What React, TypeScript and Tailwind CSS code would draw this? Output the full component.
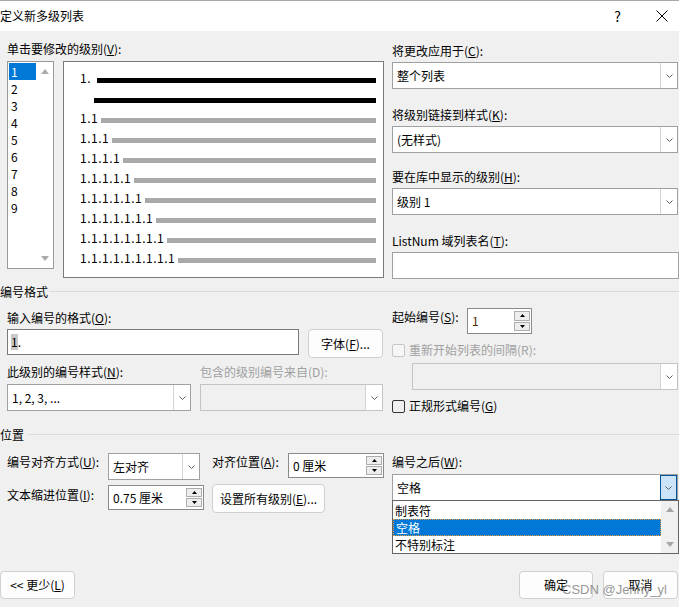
import React from 'react';

const Chevron = () => (
  <svg width="7" height="4" viewBox="0 0 7 4">
    <polyline points="0.5,0.5 3.5,3.5 6.5,0.5" fill="none" stroke="#5f5f5f" strokeWidth="1" />
  </svg>
);

const Tri = ({ up, color = '#000', w = 5, h = 3 }: { up?: boolean; color?: string; w?: number; h?: number }) => (
  <svg width={w} height={h} viewBox={`0 0 ${w} ${h}`}>
    <polygon points={up ? `0,${h} ${w / 2},0 ${w},${h}` : `0,0 ${w / 2},${h} ${w},0`} fill={color} />
  </svg>
);

const Select = ({
  value,
  className = '',
  disabled,
  focused,
}: {
  value?: string;
  className?: string;
  disabled?: boolean;
  focused?: boolean;
}) => (
  <div
    className={`flex h-[27px] border ${disabled ? 'border-[#c4c4c4] bg-[#f0f0f0]' : 'border-[#a0a0a0] bg-white'} ${className}`}
  >
    <div className="flex-1 flex items-center pl-[4px] leading-[16px] whitespace-nowrap">{value}</div>
    <div
      className={`w-[17px] flex items-center justify-center ${
        focused ? 'bg-[#cce4f7] border border-[#005499]' : 'bg-white border-l border-[#d4d4d4]'
      }`}
    >
      <Chevron />
    </div>
  </div>
);

const SpinBtn = ({ up }: { up?: boolean }) => (
  <div className="flex-1 flex items-center justify-center border border-[#adadad] bg-[#eeeeee]">
    <Tri up={up} />
  </div>
);

const Spinner = ({ value, className = '', textClass = '' }: { value?: string; className?: string; textClass?: string }) => (
  <div className={`flex h-[25px] border border-[#8a8a8a] bg-white ${className}`}>
    <div className={`flex-1 flex items-center pl-[4px] leading-[16px] whitespace-nowrap ${textClass}`}>{value}</div>
    <div className="w-[17px] flex flex-col gap-px pr-[1px] py-[2px]">
      <SpinBtn up />
      <SpinBtn />
    </div>
  </div>
);

const Btn = ({ children, className = '' }: { children: React.ReactNode; className?: string }) => (
  <div
    className={`h-[28px] flex items-center justify-center rounded-[4px] border border-[#d0d0d0] bg-[#fdfdfd] whitespace-nowrap ${className}`}
  >
    {children}
  </div>
);

const Box = ({ disabled }: { disabled?: boolean }) => (
  <span
    className={`w-[13px] h-[13px] rounded-[2px] border shrink-0 ${
      disabled ? 'border-[#c6c6c6] bg-[#f6f6f6]' : 'border-[#333333] bg-[#f0f0f0]'
    }`}
  />
);

const Label = ({ children, className = '' }: { children: React.ReactNode; className?: string }) => (
  <div className={`h-[16px] leading-[16px] whitespace-nowrap ${className}`}>{children}</div>
);

const Header = ({ title, gap }: { title: string; gap: string }) => (
  <div className="flex items-center h-[16px] leading-[16px]">
    <span>{title}</span>
    <div className={`flex-1 h-px bg-[#dadada] -mt-[2px] ${gap}`} />
  </div>
);

const levels = ['1', '2', '3', '4', '5', '6', '7', '8', '9'];
const nums = ['1.1', '1.1.1', '1.1.1.1', '1.1.1.1.1', '1.1.1.1.1.1', '1.1.1.1.1.1.1', '1.1.1.1.1.1.1.1', '1.1.1.1.1.1.1.1.1'];

const LevelList = () => (
  <div className="w-[47px] h-[208px] border border-[#9a9a9a] bg-white flex">
    <div className="pl-[1px] pt-[1px] w-[28px]">
      {levels.map((l, i) => (
        <div key={l} className={`h-[17px] leading-[17px] pl-[2px] ${i === 0 ? 'bg-[#0078d7] text-white' : ''}`}>
          {l}
        </div>
      ))}
    </div>
    <div className="w-[17px] flex flex-col justify-between">
      <div className="h-[17px] flex items-center justify-center pt-[2px]">
        <Tri up color="#ababab" w={8} h={5} />
      </div>
      <div className="h-[17px] flex items-center justify-center pb-[2px]">
        <Tri color="#ababab" w={8} h={5} />
      </div>
    </div>
  </div>
);

const Preview = () => (
  <div className="ml-[9px] w-[321px] h-[217px] border border-[#7a7a7a] bg-white pt-[6px] pl-[16px] pr-[7px]">
    <div className="flex items-center h-[20px]">
      <span className="leading-none tracking-[0.5px]">1.</span>
      <div className="flex-1 ml-[6px] h-[5px] mt-[5px] bg-black" />
    </div>
    <div className="flex items-center h-[20px] pl-[14px]">
      <div className="flex-1 h-[5px] mt-[5px] bg-black" />
    </div>
    {nums.map((n) => (
      <div key={n} className="flex items-center h-[20px]">
        <span className="leading-none tracking-[0.5px]">{n}</span>
        <div className="flex-1 ml-[3px] h-[5px] mt-[5px] bg-[#a9a9a9]" />
      </div>
    ))}
  </div>
);

export default function App() {
  return (
    <div className="relative w-[679px] h-[607px] overflow-hidden bg-[#f0f0f0] text-[12px] text-black flex flex-col font-['Noto_Sans_CJK_SC','Noto_Sans',sans-serif]">
      {/* title bar */}
      <div className="h-[31px] shrink-0 bg-white border-t border-[#a8a8a8] flex items-center">
        <span className="leading-[16px]">定义新多级列表</span>
        <span className="ml-auto text-[14px] leading-none">?</span>
        <span className="ml-[35px] mr-[11px]">
          <svg width="12" height="12" viewBox="0 0 12 12">
            <path d="M0.5 0.5 L11.5 11.5 M11.5 0.5 L0.5 11.5" stroke="#000" strokeWidth="1" />
          </svg>
        </span>
      </div>

      {/* levels + preview */}
      <div className="flex h-[253px] shrink-0">
        <div className="ml-[7px] w-[377px] flex flex-col">
          <Label className="mt-[10px]">
            单击要修改的级别(<u>V</u>):
          </Label>
          <div className="mt-[4px] flex">
            <LevelList />
            <Preview />
          </div>
        </div>
        <div className="ml-[8px] w-[287px] flex flex-col">
          <Label className="mt-[12px]">
            将更改应用于(<u>C</u>):
          </Label>
          <Select value="整个列表" className="mt-[3px] w-[286px]" />
          <Label className="mt-[18px]">
            将级别链接到样式(<u>K</u>):
          </Label>
          <Select value="(无样式)" className="mt-[3px] w-[286px]" />
          <Label className="mt-[16px]">
            要在库中显示的级别(<u>H</u>):
          </Label>
          <Select value="级别 1" className="mt-[3px] w-[286px]" />
          <Label className="mt-[18px]">
            ListNum 域列表名(<u>T</u>):
          </Label>
          <div className="mt-[3px] h-[27px] w-[287px] border border-[#a0a0a0] bg-white" />
        </div>
      </div>

      {/* number format */}
      <div className="h-[143px] shrink-0 flex flex-col">
        <Header title="编号格式" gap="ml-[2px]" />
        <div className="flex">
          <div className="ml-[7px] w-[377px] flex flex-col">
            <Label className="mt-[10px]">
              输入编号的格式(<u>O</u>):
            </Label>
            <div className="mt-[3px] flex items-start">
              <div className="w-[292px] h-[26px] border border-[#7a7a7a] bg-white flex items-center pl-[3px] leading-[16px]">
                <span className="bg-[#c8c8c8]">1</span>
                <span>.</span>
              </div>
              <Btn className="ml-[9px] w-[75px] h-[29px]">
                字体(<u>F</u>)...
              </Btn>
            </div>
            <div className="mt-[6px] flex">
              <Label className="w-[193px]">
                此级别的编号样式(<u>N</u>):
              </Label>
              <Label className="text-[#a0a0a0]">包含的级别编号来自(D):</Label>
            </div>
            <div className="mt-[4px] flex">
              <Select value="1, 2, 3, ..." className="w-[184px]" />
              <Select disabled className="ml-[9px] w-[183px]" />
            </div>
          </div>
          <div className="ml-[8px] w-[287px] flex flex-col">
            <div className="mt-[8px] flex items-start">
              <Label className="w-[75px] mt-[1px]">
                起始编号(<u>S</u>):
              </Label>
              <Spinner value="1" className="w-[65px] h-[26px]" textClass="text-[#4a2a00]" />
            </div>
            <div className="mt-[8px] h-[16px] flex items-center">
              <Box disabled />
              <span className="ml-[4px] leading-[16px] text-[#a0a0a0]">重新开始列表的间隔(R):</span>
            </div>
            <Select disabled className="mt-[5px] ml-[20px] w-[266px] bg-[#f0f0f0]" />
            <div className="mt-[8px] h-[16px] flex items-center">
              <Box />
              <span className="ml-[4px] leading-[16px]">
                正规形式编号(<u>G</u>)
              </span>
            </div>
          </div>
        </div>
      </div>

      {/* position */}
      <div className="flex-1 flex flex-col">
        <Header title="位置" gap="ml-[4px]" />
        <div className="flex">
          <div className="ml-[7px] w-[377px] flex flex-col">
            <div className="mt-[10px] flex items-start">
              <Label className="w-[101px] mt-[1px]">
                编号对齐方式(<u>U</u>):
              </Label>
              <Select value="左对齐" className="w-[92px]" />
              <Label className="ml-[12px] w-[76px] mt-[1px]">
                对齐位置(<u>A</u>):
              </Label>
              <Spinner value="0 厘米" className="w-[96px]" />
            </div>
            <div className="mt-[4px] flex items-start">
              <Label className="w-[101px] mt-[3px]">
                文本缩进位置(<u>I</u>):
              </Label>
              <Spinner value="0.75 厘米" className="w-[96px] mt-[1px]" />
              <Btn className="ml-[8px] w-[113px] h-[29px]">
                设置所有级别(<u>E</u>)...
              </Btn>
            </div>
          </div>
          <div className="ml-[8px] w-[287px] flex flex-col">
            <Label className="mt-[11px]">
              编号之后(<u>W</u>):
            </Label>
            <div className="relative mt-[4px]">
              <Select value="空格" focused className="w-[286px]" />
              <div className="absolute z-10 left-0 top-[26px] w-[287px] h-[54px] border border-[#646464] bg-white flex">
                <div className="flex-1 pt-[1px]">
                  <div className="h-[17px] leading-[17px] pl-[2px]">制表符</div>
                  <div className="h-[17px] leading-[15px] pl-[2px] bg-[#0078d7] text-white border border-dotted border-[#e89a3c]">
                    空格
                  </div>
                  <div className="h-[17px] leading-[17px] pl-[2px]">不特别标注</div>
                </div>
                <div className="w-[17px] bg-[#f0f0f0] flex flex-col justify-between py-[6px] items-center">
                  <Tri up color="#a6a6a6" w={8} h={5} />
                  <Tri color="#a6a6a6" w={8} h={5} />
                </div>
              </div>
            </div>
            {/* covered by the open list: tab stop checkbox and spinner */}
            <div className="mt-[6px] h-[16px] flex items-center">
              <Box />
            </div>
            <Spinner className="mt-[6px] ml-[18px] w-[95px]" />
          </div>
        </div>

        <div className="mt-auto mb-[8px] flex items-center">
          <Btn className="w-[75px]">
            &lt;&lt; 更少(<u>L</u>)
          </Btn>
          <Btn className="ml-auto w-[74px]">确定</Btn>
          <Btn className="ml-[10px] mr-[1px] w-[75px]">取消</Btn>
        </div>
      </div>

      <div className="absolute left-[562px] top-[581px] text-[13px] leading-[18px] text-[#7a7a7a]/80 font-['Liberation_Sans',sans-serif] pointer-events-none">
        CSDN @Jenny_yl
      </div>
    </div>
  );
}
